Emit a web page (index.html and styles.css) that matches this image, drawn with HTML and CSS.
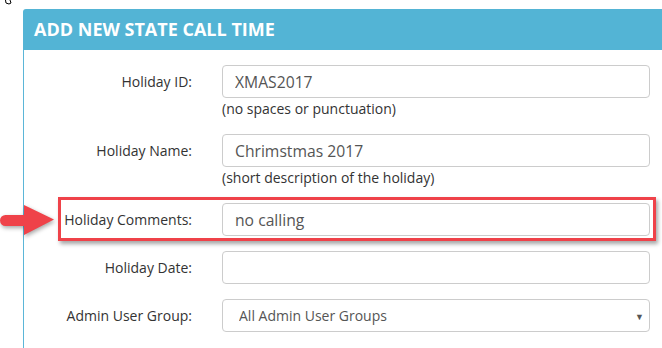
FILE: index.html
```html
<!DOCTYPE html>
<html lang="en">
<head>
    <meta charset="UTF-8">
    <meta name="viewport" content="width=device-width, initial-scale=1.0">
    <title>Add New State Call Time</title>
    <link rel="stylesheet" href="styles.css">
</head>
<body>
    <svg class="cursor" width="12" height="8" viewBox="0 0 12 8">
        <path d="M5 0 L6 3 L8 1 L10 3 L11 6 L9 7 L6 6 Z" fill="#fff" stroke="#000" stroke-width="1"/>
    </svg>
    <div class="panel">
        <div class="panel-head">ADD NEW STATE CALL TIME</div>
        <div class="panel-body">
            <div class="row">
                <label class="lbl" for="holidayId">Holiday ID:</label>
                <div class="field">
                    <input type="text" id="holidayId" class="inp" value="XMAS2017">
                    <div class="help">(no spaces or punctuation)</div>
                </div>
            </div>
            <div class="row">
                <label class="lbl" for="holidayName">Holiday Name:</label>
                <div class="field">
                    <input type="text" id="holidayName" class="inp" value="Chrimstmas 2017">
                    <div class="help">(short description of the holiday)</div>
                </div>
            </div>
            <div class="row highlight">
                <label class="lbl" for="holidayComments">Holiday Comments:</label>
                <div class="field">
                    <input type="text" id="holidayComments" class="inp" value="no calling">
                </div>
            </div>
            <div class="row">
                <label class="lbl" for="holidayDate">Holiday Date:</label>
                <div class="field">
                    <input type="text" id="holidayDate" class="inp" value="">
                </div>
            </div>
            <div class="row">
                <label class="lbl" for="adminGroup">Admin User Group:</label>
                <div class="field select-wrap">
                    <select id="adminGroup" class="inp sel">
                        <option>All Admin User Groups</option>
                    </select>
                    <span class="caret">&#9660;</span>
                </div>
            </div>
        </div>
    </div>
    <div class="callout-box"></div>
    <svg class="arrow" width="60" height="50" viewBox="0 0 60 50">
        <path d="M5.5 20 H24 V10 L54 24.5 L24 40 V31 H5.5 A5.5 5.5 0 0 1 5.5 20 Z" fill="#ef4249"/>
    </svg>
</body>
</html>
```

FILE: styles.css
```css
body{
    margin:0;
    background:#fff;
    font-family:"Open Sans", "Liberation Sans", sans-serif;
    font-size:14px;
    color:#333;
    overflow:hidden;
}
.cursor{
    position:absolute;
    left:0;
    top:-3px;
}
.panel{
    margin:9px 0 0 23px;
    width:660px;
}
.panel-head{
    background:#53b4d5;
    color:#fff;
    font-weight:bold;
    font-size:18px;
    height:41px;
    line-height:41px;
    padding-left:11px;
    border-radius:3px 0 0 0;
}
.panel-body{
    border-left:1px solid #5bb6d8;
    padding-top:15px;
    height:290px;
}
.row{
    display:flex;
    margin-bottom:15px;
}
.lbl{
    width:168px;
    text-align:right;
    line-height:33px;
    padding-right:30px;
    flex-shrink:0;
}
.field{
    width:428px;
}
.inp{
    display:block;
    box-sizing:border-box;
    width:428px;
    height:33px;
    border:1px solid #ccc;
    border-radius:4px;
    padding:0 12px;
    font-family:"Open Sans", "Liberation Sans", sans-serif;
    font-size:15.7px;
    color:#555;
    background:#fff;
}
.help{
    line-height:21px;
    color:#333;
}
.select-wrap{
    position:relative;
}
.sel{
    appearance:none;
    -webkit-appearance:none;
    padding-left:16px;
    font-size:14px;
}
.caret{
    position:absolute;
    right:6px;
    top:11px;
    font-size:9px;
    color:#555;
}
.callout-box{
    position:absolute;
    left:58px;
    top:197px;
    width:592px;
    height:38px;
    border:3px solid #ef4249;
    box-shadow:2px 3px 4px rgba(0,0,0,0.35);
}
.arrow{
    position:absolute;
    left:0;
    top:195px;
    filter:drop-shadow(1px 2px 2px rgba(0,0,0,0.35));
}
```
